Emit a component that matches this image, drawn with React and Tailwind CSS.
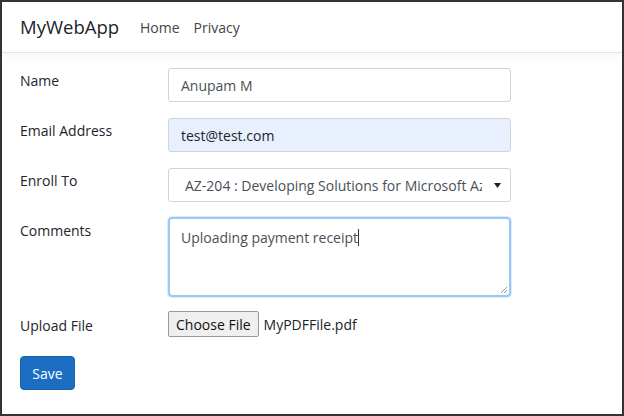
const FONT = { fontFamily: '"Segoe UI", "Open Sans", "Noto Sans", sans-serif' };

function Row({ label, children }) {
  return (
    <div className="flex items-start">
      <label className="w-[148px] shrink-0 pt-[3px] text-[14px] leading-[20px] text-[#212529]">{label}</label>
      <div className="w-[343px]">{children}</div>
    </div>
  );
}

export default function App() {
  return (
    <div className="w-[624px] h-[416px] bg-white border-2 border-[#333] overflow-hidden" style={FONT}>
      {/* navbar */}
      <nav className="h-[51px] flex items-center px-[18px] border-b border-[#e5e5e5] shadow-[0_4px_12px_rgba(0,0,0,0.04)]">
        <span className="text-[18.5px] text-[#212529] mr-[21px]">MyWebApp</span>
        <a className="text-[14px] text-[#444] mr-[14px]">Home</a>
        <a className="text-[14px] text-[#444]">Privacy</a>
      </nav>

      {/* form */}
      <form className="px-[18px] pt-[15px] flex flex-col gap-[16px]">
        <Row label="Name">
          <input
            defaultValue="Anupam M"
            className="w-full h-[34px] px-[12px] border border-[#ced4da] rounded-[3px] text-[14px] text-[#495057] outline-none"
          />
        </Row>
        <Row label="Email Address">
          <input
            defaultValue="test@test.com"
            className="w-full h-[34px] px-[12px] border border-[#ced4da] rounded-[3px] bg-[#e8f0fe] text-[14px] text-[#212529] outline-none"
          />
        </Row>
        <Row label="Enroll To">
          <div className="relative w-full h-[34px] border border-[#ced4da] rounded-[3px] flex items-center pl-[16px] pr-[28px]">
            <span className="min-w-0 whitespace-nowrap overflow-hidden text-[14px] text-[#495057] block">
              AZ-204 : Developing Solutions for Microsoft Azure
            </span>
            <svg className="absolute right-[9px] top-[14px]" width="7" height="5" viewBox="0 0 7 5">
              <path d="M0 0h7L3.5 5z" fill="#222" />
            </svg>
          </div>
        </Row>
        <Row label="Comments">
          <div className="relative w-full h-[80px] -mt-px border-2 border-[#9cc8f2] rounded-[4px] shadow-[0_0_0_1px_rgba(0,123,255,0.15)] px-[11px] pt-[6px]">
            <span className="text-[14px] text-[#495057]">Uploading payment receipt</span>
            <span className="inline-block w-px h-[17px] bg-[#333] align-middle -mt-[2px]" />
            <svg className="absolute right-[1px] bottom-[1px]" width="8" height="8" viewBox="0 0 8 8">
              <path d="M7 1L1 7M7 4L4 7" stroke="#999" strokeWidth="1" />
            </svg>
          </div>
        </Row>
        <Row label="Upload File">
          <div className="flex items-center -mt-[2px]">
            <span className="h-[26px] px-[7px] flex items-center border border-[#9a9a9a] rounded-[2px] bg-[#efefef] text-[14px] text-[#111]">
              Choose File
            </span>
            <span className="ml-[5px] text-[14px] text-[#212529]">MyPDFFile.pdf</span>
          </div>
        </Row>
        <div className="mt-[3px]">
          <button
            type="button"
            className="w-[55px] h-[34px] rounded-[4px] bg-[#1b6ec2] border border-[#1861ac] text-white text-[14px]"
          >
            Save
          </button>
        </div>
      </form>
    </div>
  );
}
